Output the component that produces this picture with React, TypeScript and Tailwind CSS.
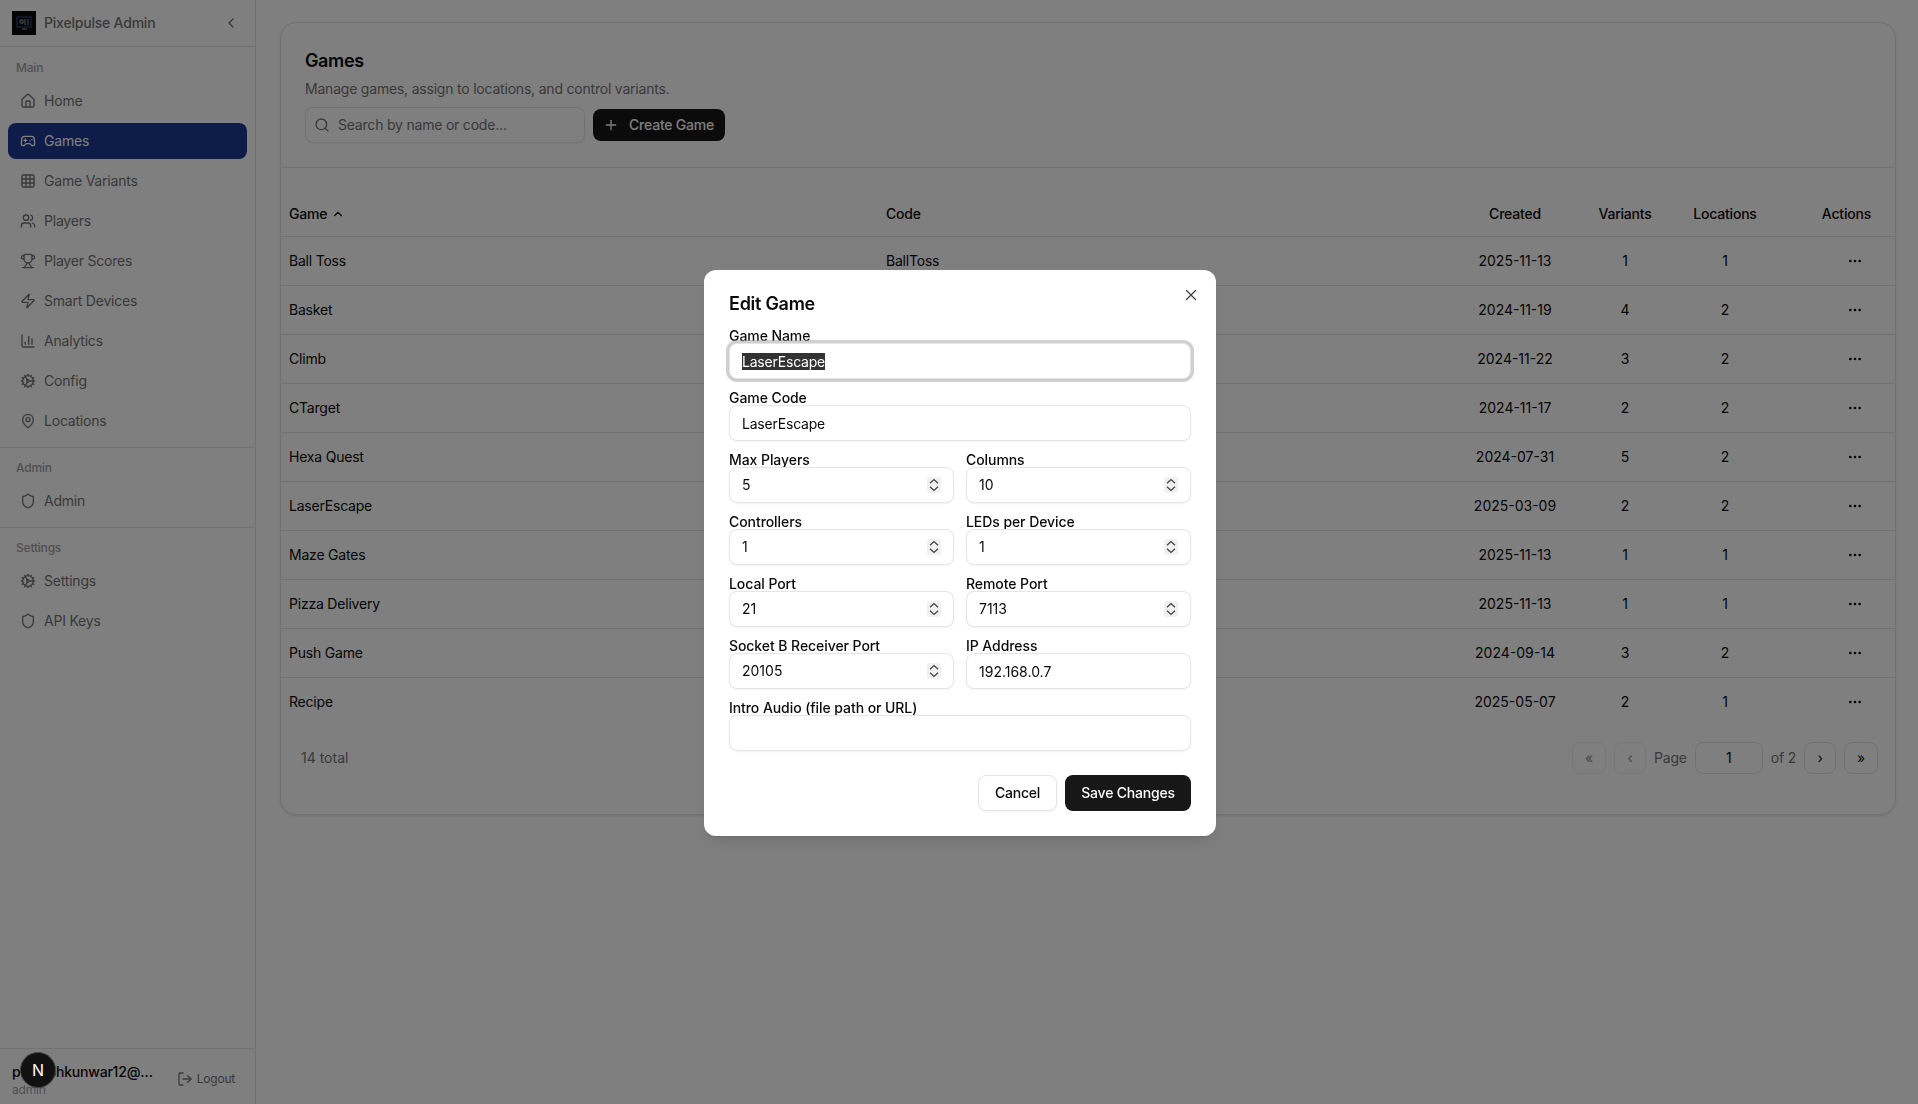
import React, { useEffect, useRef } from 'react';
import {
  House,
  Gamepad2,
  Grid3x3,
  Users,
  Trophy,
  Zap,
  ChartColumn,
  Cog,
  MapPin,
  Shield,
  LogOut,
  Search,
  Plus,
  X,
  ChevronUp,
  ChevronLeft,
  Ellipsis,
} from 'lucide-react';

const sections = [
  {
    label: 'Main',
    items: [
      { name: 'Home', icon: House },
      { name: 'Games', icon: Gamepad2, active: true },
      { name: 'Game Variants', icon: Grid3x3 },
      { name: 'Players', icon: Users },
      { name: 'Player Scores', icon: Trophy },
      { name: 'Smart Devices', icon: Zap },
      { name: 'Analytics', icon: ChartColumn },
      { name: 'Config', icon: Cog },
      { name: 'Locations', icon: MapPin },
    ],
  },
  { label: 'Admin', items: [{ name: 'Admin', icon: Shield }] },
  {
    label: 'Settings',
    items: [
      { name: 'Settings', icon: Cog },
      { name: 'API Keys', icon: Shield },
    ],
  },
];

const games = [
  ['Ball Toss', 'BallToss', '2025-11-13', 1, 1],
  ['Basket', 'Basket', '2024-11-19', 4, 2],
  ['Climb', 'Climb', '2024-11-22', 3, 2],
  ['CTarget', 'CTarget', '2024-11-17', 2, 2],
  ['Hexa Quest', 'HexaQuest', '2024-07-31', 5, 2],
  ['LaserEscape', 'LaserEscape', '2025-03-09', 2, 2],
  ['Maze Gates', 'MazeGates', '2025-11-13', 1, 1],
  ['Pizza Delivery', 'PizzaDelivery', '2025-11-13', 1, 1],
  ['Push Game', 'PushGame', '2024-09-14', 3, 2],
  ['Recipe', 'Recipe', '2025-05-07', 2, 1],
];

const inputClass =
  'h-9 w-full rounded-lg border border-[#e5e5e5] bg-white px-3 text-sm text-[#0a0a0a] shadow-xs outline-none';
const labelClass = 'block text-sm leading-none font-medium tracking-[-0.005em] text-[#0a0a0a]';

function Field({ label, value, numeric }: { label: string; value: string; numeric?: boolean }) {
  return (
    <label className="block">
      <span className={labelClass}>{label}</span>
      <input defaultValue={value} className={`${inputClass} ${numeric ? 'tracking-normal' : ''}`} />
    </label>
  );
}

function NumberField({ label, value }: { label: string; value: string }) {
  return (
    <label className="block">
      <span className={labelClass}>{label}</span>
      <div className="relative">
        <input
          type="number"
          defaultValue={value}
          className={`${inputClass} pb-px tracking-normal [appearance:textfield] [&::-webkit-inner-spin-button]:appearance-none`}
        />
        {/* spinner arrows */}
        <svg
          width="14"
          height="16"
          viewBox="0 0 14 16"
          className="absolute top-[10px] right-[13px] rounded-[3px] bg-[#f0f0f0]"
        >
          <path d="M3 6.2 7 2.6l4 3.6M3 9.8l4 3.6 4-3.6" fill="none" stroke="#404040" strokeWidth="1.25" />
        </svg>
      </div>
    </label>
  );
}

function Sidebar() {
  return (
    <aside className="flex h-full w-64 shrink-0 flex-col border-r border-[#e5e5e5] bg-white">
      <div className="flex h-[47px] shrink-0 items-center justify-between border-b border-[#e5e5e5] pr-4 pl-3">
        <div className="flex items-center gap-2">
          <svg width="24" height="24" viewBox="0 0 24 24" className="bg-[#0a0a0a]">
            <rect x="5" y="6" width="14" height="10" fill="none" stroke="#3b4a8c" strokeWidth="1" />
            <path d="M8 9h3v3H8zM13 8v6M16 8v6M10 18h5" fill="none" stroke="#9aa0b0" strokeWidth="1" />
          </svg>
          <span className="text-sm font-medium text-[#737373]">Pixelpulse Admin</span>
        </div>
        <ChevronLeft className="size-4 text-[#737373]" />
      </div>

      {sections.map((section, i) => (
        <div
          key={section.label}
          className={`px-2 pb-2 ${i === 0 ? 'pt-[13px]' : 'pt-3'} ${i < 2 ? 'border-b border-[#e5e5e5]' : ''}`}
        >
          <div className="mb-[7px] px-2 text-xs leading-4 font-medium text-[#a1a1a1]">{section.label}</div>
          <div className="flex flex-col gap-1">
            {section.items.map((item) => {
              const Icon = item.icon;
              return (
                <div
                  key={item.name}
                  className={`flex h-9 items-center gap-2 rounded-lg px-3 text-sm ${
                    item.active ? 'bg-[#1a3890] text-white' : 'text-[#737373]'
                  }`}
                >
                  <Icon className="size-4" />
                  {item.name}
                </div>
              );
            })}
          </div>
        </div>
      ))}

      <div className="mt-auto flex h-14 items-center justify-between border-t border-[#e5e5e5] pr-5 pl-3">
        <div className="mt-[6px] w-[146px]">
          <div className="truncate text-sm leading-5 font-medium text-[#0a0a0a]">prakashkunwar12@gmail.com</div>
          <div className="text-xs leading-4 text-[#a1a1a1]">admin</div>
        </div>
        <div className="mt-[5px] flex items-center gap-1 text-xs text-[#737373]">
          <LogOut className="size-4" />
          Logout
        </div>
      </div>
    </aside>
  );
}

function GamesCard() {
  return (
    <section className="rounded-2xl border border-[#e5e5e5] bg-white shadow-sm">
      <header className="border-b border-[#e5e5e5] px-6 pt-[26px] pb-6">
        <h1 className="text-lg leading-6 font-semibold tracking-[-0.02em] text-[#0a0a0a]">Games</h1>
        <p className="mt-[6px] text-sm leading-5 text-[#737373]">Manage games, assign to locations, and control variants.</p>
        <div className="mt-2 flex items-center gap-2">
          <div className="flex h-9 w-[280px] items-center gap-2 rounded-lg border border-[#e5e5e5] px-2 shadow-xs">
            <Search className="size-4 text-[#737373]" />
            <span className="text-sm text-[#737373]">Search by name or code...</span>
          </div>
          <button className="flex h-8 items-center gap-2.5 rounded-lg bg-[#171717] pr-[11px] pl-2.5 text-sm font-medium text-[#fafafa]">
            <Plus className="size-4" />
            Create Game
          </button>
        </div>
      </header>

      <table className="mt-6 w-full table-fixed text-sm text-[#0a0a0a]">
        <colgroup>
          <col className="w-[597px]" />
          <col />
          <col className="w-[128px]" />
          <col className="w-[92px]" />
          <col className="w-[108px]" />
          <col className="w-[116px]" />
        </colgroup>
        <thead>
          <tr className="h-11 border-b border-[#e5e5e5]">
            <th className="px-2 text-left font-medium">
              <span className="flex items-center gap-1">
                Game <ChevronUp className="size-3.5" />
              </span>
            </th>
            <th className="px-2 text-left font-medium">Code</th>
            <th className="font-medium">Created</th>
            <th className="font-medium">Variants</th>
            <th className="font-medium">Locations</th>
            <th className="pr-6 text-right font-medium">Actions</th>
          </tr>
        </thead>
        <tbody>
          {games.map((game) => (
            <tr key={game[0]} className="h-[49px] border-b border-[#e5e5e5] last:border-b-0">
              <td className="px-2">{game[0]}</td>
              <td className="px-2">{game[1]}</td>
              <td className="text-center tracking-normal">{game[2]}</td>
              <td className="text-center">{game[3]}</td>
              <td className="text-center">{game[4]}</td>
              <td className="pr-8 text-right">
                <Ellipsis className="ml-auto size-4" />
              </td>
            </tr>
          ))}
        </tbody>
      </table>

      <footer className="flex h-[88px] items-start justify-between pt-4 pr-[17px] pl-5">
        <span className="text-sm leading-8 tracking-normal text-[#737373]">14 total</span>
        <div className="flex items-center gap-2 text-sm">
          <button className="h-8 w-[34px] rounded-lg border border-[#e5e5e5] text-[#0a0a0a] opacity-50">«</button>
          <button className="h-8 w-8 rounded-lg border border-[#e5e5e5] text-[#0a0a0a] opacity-50">‹</button>
          <span className="text-[#737373]">Page</span>
          <div className="flex h-8 w-[68px] items-center justify-center rounded-lg border border-[#e5e5e5] text-[#0a0a0a]">1</div>
          <span className="text-[#737373]">of 2</span>
          <button className="h-8 w-8 rounded-lg border border-[#e5e5e5] text-[#0a0a0a]">›</button>
          <button className="h-8 w-[34px] rounded-lg border border-[#e5e5e5] text-[#0a0a0a]">»</button>
        </div>
      </footer>
    </section>
  );
}

function EditGameDialog() {
  const nameRef = useRef<HTMLInputElement>(null);

  useEffect(() => {
    nameRef.current?.focus();
    nameRef.current?.select();
  }, []);

  return (
    <div className="fixed top-[270px] left-[704px] flex w-[512px] flex-col gap-4 rounded-xl bg-white p-[25px] shadow-lg">
      <h2 className="text-lg leading-none font-semibold tracking-[-0.015em] text-[#0a0a0a]">Edit Game</h2>
      <X className="absolute top-4 right-4 size-[18px] text-[#404040]" strokeWidth={1.75} />

      <div className="flex flex-col gap-3">
        <label className="block">
          <span className={labelClass}>Game Name</span>
          <input
            ref={nameRef}
            defaultValue="LaserEscape"
            className={`${inputClass} border-[#a1a1a1] ring-[3px] ring-[#a1a1a1]/50 selection:bg-[#333] selection:text-white`}
          />
        </label>
        <Field label="Game Code" value="LaserEscape" />
        <div className="grid grid-cols-2 gap-3">
          <NumberField label="Max Players" value="5" />
          <NumberField label="Columns" value="10" />
          <NumberField label="Controllers" value="1" />
          <NumberField label="LEDs per Device" value="1" />
          <NumberField label="Local Port" value="21" />
          <NumberField label="Remote Port" value="7113" />
          <NumberField label="Socket B Receiver Port" value="20105" />
          <Field label="IP Address" value="192.168.0.7" numeric />
        </div>
        <Field label="Intro Audio (file path or URL)" value="" />
      </div>

      <div className="mt-2 flex justify-end gap-2">
        <button className="h-9 w-[79px] rounded-lg border border-[#e5e5e5] bg-white text-sm font-medium text-[#0a0a0a] shadow-xs">
          Cancel
        </button>
        <button className="h-9 w-[126px] rounded-lg bg-[#171717] text-sm font-medium text-[#fafafa]">Save Changes</button>
      </div>
    </div>
  );
}

export default function App() {
  return (
    <div className="flex h-screen overflow-hidden bg-white font-['Inter',sans-serif] tracking-[-0.013em]">
      <Sidebar />
      <main className="min-w-0 flex-1 pt-[22px] pr-[22px] pl-6">
        <GamesCard />
      </main>

      <div className="fixed inset-0 bg-black/50" />
      <EditGameDialog />

      <div className="fixed top-[1052px] left-5 flex size-9 items-center justify-center rounded-full border border-[#444] bg-[#111] text-base font-normal text-white">
        N
      </div>
    </div>
  );
}
